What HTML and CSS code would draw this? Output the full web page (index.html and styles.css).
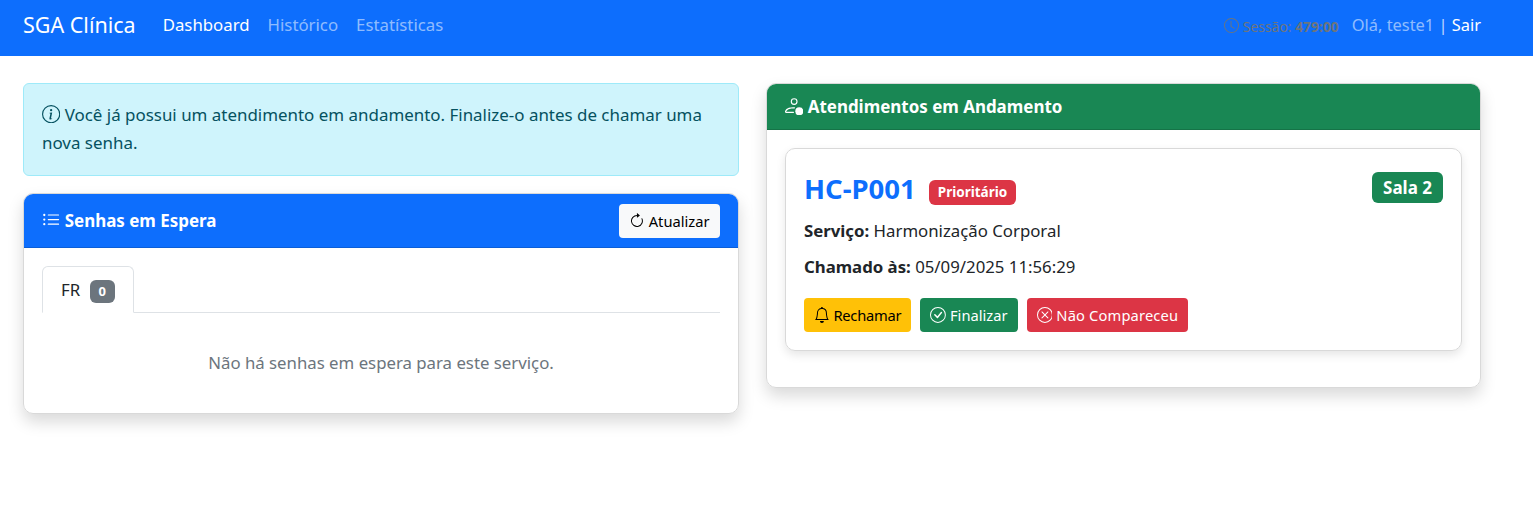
FILE: index.html
```html
<!DOCTYPE html>
<html lang="pt-BR">
<head>
  <meta charset="UTF-8" />
  <title>SGA Clínica - Dashboard</title>
  <link rel="stylesheet" href="styles.css">
</head>
<body>

  <!-- Navbar -->
  <nav class="navbar">
    <a class="brand" href="#">SGA Clínica</a>
    <a class="nav-link active" href="#">Dashboard</a>
    <a class="nav-link" href="#">Histórico</a>
    <a class="nav-link" href="#">Estatísticas</a>
    <div class="nav-right">
      <span class="session">
        <svg class="icon" viewBox="0 0 16 16"><path d="M8 3.5a.5.5 0 0 0-1 0V9a.5.5 0 0 0 .252.434l3.5 2a.5.5 0 0 0 .496-.868L8 8.71z"/><path d="M8 16A8 8 0 1 0 8 0a8 8 0 0 0 0 16m7-8A7 7 0 1 1 1 8a7 7 0 0 1 14 0"/></svg>
        Sessão: <b>479:00</b>
      </span>
      <span class="user">Olá, teste1 <span class="sep">|</span> <a href="#">Sair</a></span>
    </div>
  </nav>

  <main class="content">
    <!-- Left column -->
    <section class="col">
      <div class="alert">
        <svg class="icon" viewBox="0 0 16 16"><path d="M8 15A7 7 0 1 1 8 1a7 7 0 0 1 0 14m0 1A8 8 0 1 0 8 0a8 8 0 0 0 0 16"/><path d="m8.93 6.588-2.29.287-.082.38.45.083c.294.07.352.176.288.469l-.738 3.468c-.194.897.105 1.319.808 1.319.545 0 1.178-.252 1.465-.598l.088-.416c-.2.176-.492.246-.686.246-.275 0-.375-.193-.304-.533zM9 4.5a1 1 0 1 1-2 0 1 1 0 0 1 2 0"/></svg>
        Você já possui um atendimento em andamento. Finalize-o antes de chamar uma nova senha.
      </div>

      <div class="card">
        <div class="card-header header-blue">
          <h5>
            <svg class="icon" viewBox="0 0 16 16"><path fill-rule="evenodd" d="M5 11.5a.5.5 0 0 1 .5-.5h9a.5.5 0 0 1 0 1h-9a.5.5 0 0 1-.5-.5m0-4a.5.5 0 0 1 .5-.5h9a.5.5 0 0 1 0 1h-9a.5.5 0 0 1-.5-.5m0-4a.5.5 0 0 1 .5-.5h9a.5.5 0 0 1 0 1h-9a.5.5 0 0 1-.5-.5m-3 1a1 1 0 1 0 0-2 1 1 0 0 0 0 2m0 4a1 1 0 1 0 0-2 1 1 0 0 0 0 2m0 4a1 1 0 1 0 0-2 1 1 0 0 0 0 2"/></svg>
            Senhas em Espera
          </h5>
          <button class="btn btn-light">
            <svg class="icon" viewBox="0 0 16 16"><path fill-rule="evenodd" d="M8 3a5 5 0 1 0 4.546 2.914.5.5 0 0 1 .908-.417A6 6 0 1 1 8 2z"/><path d="M8 4.466V.534a.25.25 0 0 1 .41-.192l2.36 1.966c.12.1.12.284 0 .384L8.41 4.658A.25.25 0 0 1 8 4.466"/></svg>
            Atualizar
          </button>
        </div>
        <div class="card-body">
          <div class="tabs">
            <div class="tab">FR <span class="count">0</span></div>
          </div>
          <p class="empty">Não há senhas em espera para este serviço.</p>
        </div>
      </div>
    </section>

    <!-- Right column -->
    <section class="col">
      <div class="card card-right">
        <div class="card-header header-green">
          <h5>
            <svg class="icon" viewBox="0 0 16 16"><path d="M8 7a3 3 0 1 0 0-6 3 3 0 0 0 0 6m2-3a2 2 0 1 1-4 0 2 2 0 0 1 4 0"/><path d="M1 14s-1 0-1-1 1-4 7-4c.7 0 1.3.04 1.9.12l-.5.93A11 11 0 0 0 7 10c-4.7 0-5.8 2.3-6 3h6.6l.3 1z"/><circle cx="12.5" cy="12.5" r="3.5"/></svg>
            Atendimentos em Andamento
          </h5>
        </div>
        <div class="card-body">
          <div class="ticket">
            <div class="ticket-top">
              <div class="ticket-title">
                <span class="code">HC-P001</span>
                <span class="badge badge-red">Prioritário</span>
              </div>
              <span class="badge badge-room">Sala 2</span>
            </div>
            <p><b>Serviço:</b> Harmonização Corporal</p>
            <p><b>Chamado às:</b> 05/09/2025 11:56:29</p>
            <div class="actions">
              <button class="btn btn-yellow">
                <svg class="icon" viewBox="0 0 16 16"><path d="M8 16a2 2 0 0 0 2-2H6a2 2 0 0 0 2 2M8 1.918l-.797.161A4 4 0 0 0 4 6c0 .628-.134 2.197-.459 3.742-.16.767-.376 1.566-.663 2.258h10.244c-.287-.692-.502-1.49-.663-2.258C12.134 8.197 12 6.628 12 6a4 4 0 0 0-3.203-3.92zM14.22 12c.223.447.481.801.78 1H1c.299-.199.557-.553.78-1C2.68 10.2 3 6.88 3 6c0-2.42 1.72-4.44 4.005-4.901a1 1 0 1 1 1.99 0A5 5 0 0 1 13 6c0 .88.32 4.2 1.22 6"/></svg>
                Rechamar
              </button>
              <button class="btn btn-green">
                <svg class="icon" viewBox="0 0 16 16"><path d="M8 15A7 7 0 1 1 8 1a7 7 0 0 1 0 14m0 1A8 8 0 1 0 8 0a8 8 0 0 0 0 16"/><path d="m10.97 4.97-.02.022-3.473 4.425-2.093-2.094a.75.75 0 0 0-1.06 1.06L6.97 11.03a.75.75 0 0 0 1.079-.02l3.992-4.99a.75.75 0 0 0-1.071-1.05"/></svg>
                Finalizar
              </button>
              <button class="btn btn-red">
                <svg class="icon" viewBox="0 0 16 16"><path d="M8 15A7 7 0 1 1 8 1a7 7 0 0 1 0 14m0 1A8 8 0 1 0 8 0a8 8 0 0 0 0 16"/><path d="M4.646 4.646a.5.5 0 0 1 .708 0L8 7.293l2.646-2.647a.5.5 0 0 1 .708.708L8.707 8l2.647 2.646a.5.5 0 0 1-.708.708L8 8.707l-2.646 2.647a.5.5 0 0 1-.708-.708L7.293 8 4.646 5.354a.5.5 0 0 1 0-.708"/></svg>
                Não Compareceu
              </button>
            </div>
          </div>
        </div>
      </div>
    </section>
  </main>

</body>
</html>
```

FILE: styles.css
```css
* {
  box-sizing: border-box;
}

body {
  margin: 0;
  min-height: 100vh;
  background: #ffffff;
  color: #212529;
  font-family: 'Noto Sans', 'Open Sans', sans-serif;
  font-size: 16.8px;
  line-height: 25px;
}

a {
  text-decoration: none;
}

.icon {
  width: 1.08em;
  height: 1.08em;
  fill: currentColor;
  vertical-align: -0.14em;
}

/* navbar */
.navbar {
  display: flex;
  align-items: center;
  height: 56px;
  padding: 0 52px 7px 23px;
  background: #0d6efd;
}

.brand {
  color: #ffffff;
  font-size: 21.5px;
  margin-right: 18px;
}

.nav-link {
  color: rgba(255, 255, 255, 0.55);
  padding: 0 9px;
}

.nav-link.active {
  color: #ffffff;
}

.nav-right {
  display: flex;
  align-items: center;
  margin-left: auto;
}

.session {
  color: #6c757d;
  font-size: 13.9px;
  margin-right: 13px;
  padding-top: 3px;
}

.user {
  color: rgba(255, 255, 255, 0.55);
  font-size: 16.4px;
}

.user .sep {
  color: rgba(255, 255, 255, 0.75);
}

.user a {
  color: #ffffff;
}

/* columns */
.content {
  display: grid;
  grid-template-columns: 716px 715px;
  gap: 27px;
  padding: 27px 0 0 23px;
}

.alert {
  height: 93px;
  margin-bottom: 17px;
  padding: 17px 18px;
  background: #cff4fc;
  border: 1px solid #9eeaf9;
  border-radius: 6px;
  color: #055160;
  font-size: 16.93px;
  line-height: 28px;
}

/* cards */
.card {
  border: 1px solid #d9d9d9;
  border-radius: 10px;
  box-shadow: 0 8px 16px rgba(0, 0, 0, 0.15);
  overflow: hidden;
}

.card-header {
  display: flex;
  align-items: center;
  justify-content: space-between;
  color: #ffffff;
  padding: 0 18px;
}

.card-header h5 {
  margin: 0;
  font-size: 16.95px;
  font-weight: 700;
}

.header-blue {
  height: 54px;
  background: #0d6efd;
  border-bottom: 1px solid #0b5ed7;
}

.header-green {
  height: 46px;
  background: #198754;
  border-bottom: 1px solid #157347;
}

.card-body {
  padding: 18px;
}

.card-right .card-body {
  padding-bottom: 36px;
}

/* tabs */
.tabs {
  display: flex;
  border-bottom: 1px solid #dee2e6;
}

.tab {
  height: 47px;
  margin-bottom: -1px;
  padding: 10px 18px;
  background: #ffffff;
  border: 1px solid #dee2e6;
  border-bottom-color: #ffffff;
  border-radius: 6px 6px 0 0;
}

.count {
  display: inline-block;
  margin-left: 5px;
  padding: 3px 9px;
  background: #6c757d;
  border-radius: 6px;
  color: #ffffff;
  font-size: 13px;
  font-weight: 700;
  line-height: 17px;
}

.empty {
  margin: 0;
  padding: 37px 0 20px;
  color: #6c757d;
  text-align: center;
}

/* ticket */
.ticket {
  padding: 18px;
  border: 1px solid #d9d9d9;
  border-radius: 10px;
  box-shadow: 0 4px 10px rgba(0, 0, 0, 0.1);
}

.ticket p {
  margin: 0 0 11px;
}

.ticket-top {
  display: flex;
  justify-content: space-between;
  align-items: flex-start;
  height: 44px;
  margin-bottom: 7px;
}

.ticket-title {
  display: flex;
  align-items: center;
  gap: 13px;
  height: 43px;
}

.code {
  color: #0d6efd;
  font-size: 27.5px;
  font-weight: 700;
  line-height: 43px;
}

.badge {
  border-radius: 6px;
  color: #ffffff;
  font-weight: 700;
}

.badge-red {
  margin-top: 8px;
  padding: 3px 9px;
  background: #dc3545;
  font-size: 13.5px;
  line-height: 19px;
}

.badge-room {
  margin-top: 5px;
  padding: 4px 11px;
  background: #198754;
  font-size: 17px;
  line-height: 23px;
}

/* buttons */
.btn {
  font-family: inherit;
  font-size: 14.7px;
  line-height: 22px;
  padding: 6px 10px;
  border: 0;
  border-radius: 4px;
  cursor: pointer;
}

.btn-light {
  padding: 6px 10.5px;
  background: #f8f9fa;
  color: #000000;
}

.actions {
  display: flex;
  gap: 9px;
  margin-top: 19px;
}

.btn-yellow {
  background: #ffc107;
  color: #000000;
  letter-spacing: -0.25px;
}

.btn-green {
  background: #198754;
  color: #ffffff;
}

.btn-red {
  background: #dc3545;
  color: #ffffff;
  letter-spacing: 0.15px;
}
```
